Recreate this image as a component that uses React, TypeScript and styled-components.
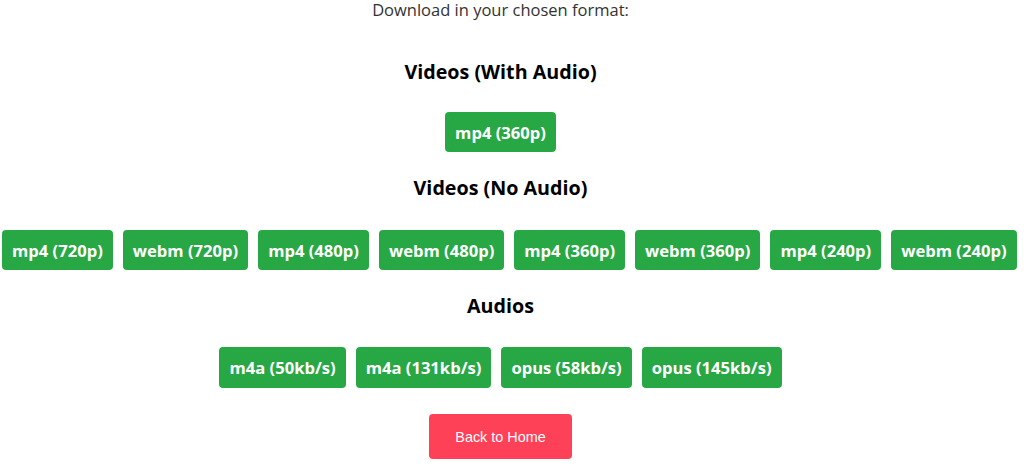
import styled, { createGlobalStyle } from 'styled-components';

const GlobalStyle = createGlobalStyle`
  html, body {
    margin: 0;
    padding: 0;
    background: #ffffff;
  }
  body {
    font-family: "Open Sans", "Noto Sans", sans-serif;
    overflow: hidden;
  }
`;

const Page = styled.div`
  width: 1024px;
  height: 472px;
  padding: 0 25px 0 2px;
  box-sizing: border-box;
  display: flex;
  flex-direction: column;
  align-items: center;
`;

const Intro = styled.p`
  margin: 0;
  font-size: 16.5px;
  line-height: 20px;
  color: #333333;
`;

const Heading = styled.h3`
  margin: 0;
  font-size: 19.7px;
  font-weight: 700;
  line-height: 26px;
  color: #000000;
  margin-top: ${p => p.$top}px;
  margin-bottom: ${p => p.$bottom}px;
`;

const Row = styled.div`
  display: flex;
  justify-content: safe center;
  gap: 10px;
  width: 100%;
`;

const FormatButton = styled.button`
  flex: none;
  height: ${p => p.$h ?? 40}px;
  padding: 0 10px;
  border: none;
  border-radius: 4px;
  background: #28a745;
  color: #ffffff;
  font-family: "Open Sans", "Noto Sans", sans-serif;
  font-size: 16.6px;
  font-weight: 700;
  white-space: nowrap;
  cursor: pointer;
`;

const HomeButton = styled.button`
  margin-top: 26px;
  height: 45px;
  width: 143px;
  border: none;
  border-radius: 4px;
  background: #ff4158;
  color: #ffffff;
  font-family: "Liberation Sans", Arial, sans-serif;
  font-size: 14.4px;
  cursor: pointer;
`;

const withAudio = ['mp4 (360p)'];
const noAudio = [
  'mp4 (720p)', 'webm (720p)', 'mp4 (480p)', 'webm (480p)',
  'mp4 (360p)', 'webm (360p)', 'mp4 (240p)', 'webm (240p)',
];
const audios = ['m4a (50kb/s)', 'm4a (131kb/s)', 'opus (58kb/s)', 'opus (145kb/s)'];

export default function App() {
  return (
    <>
      <GlobalStyle />
      <Page>
        <Intro>Download in your chosen format:</Intro>

        <Heading $top={39} $bottom={27}>Videos (With Audio)</Heading>
        <Row>
          {withAudio.map(f => <FormatButton key={f}>{f}</FormatButton>)}
        </Row>

        <Heading $top={23} $bottom={29}>Videos (No Audio)</Heading>
        <Row>
          {noAudio.map(f => <FormatButton key={f}>{f}</FormatButton>)}
        </Row>

        <Heading $top={23} $bottom={28}>Audios</Heading>
        <Row>
          {audios.map(f => <FormatButton key={f} $h={41}>{f}</FormatButton>)}
        </Row>

        <HomeButton>Back to Home</HomeButton>
      </Page>
    </>
  );
}
